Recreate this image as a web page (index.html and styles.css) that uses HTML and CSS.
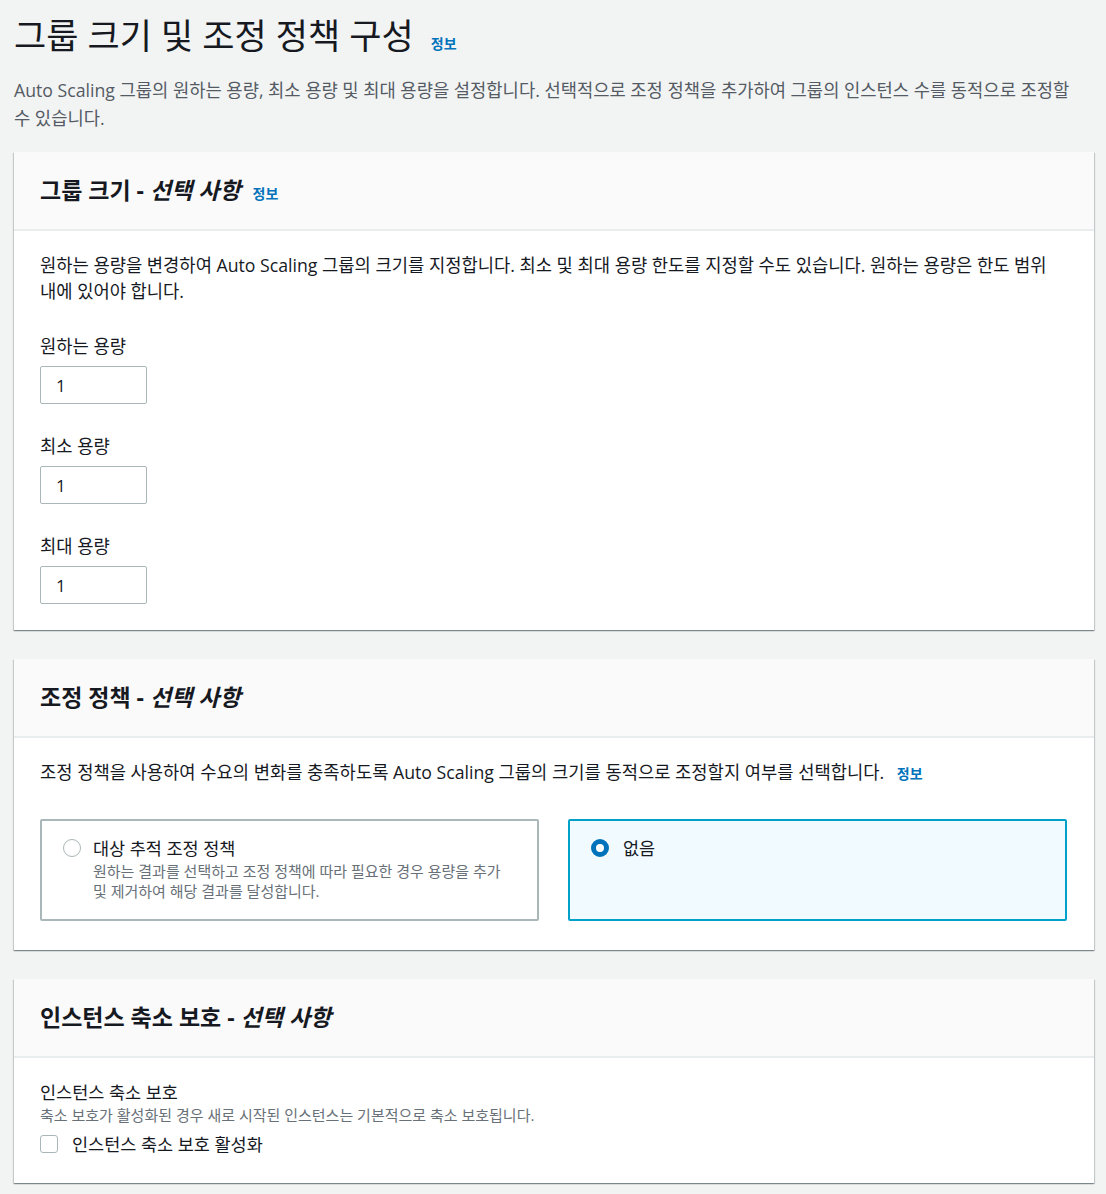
FILE: index.html
```html
<!DOCTYPE html>
<html lang="ko">

<head>
    <meta charset="UTF-8">
    <meta name="viewport" content="width=device-width, initial-scale=1.0">
    <title>그룹 크기 및 조정 정책 구성</title>
    <link rel="stylesheet" href="styles.css">
</head>

<body>
    <div class="page">
        <header class="page-head">
            <h1>그룹 크기 및 조정 정책 구성 <a class="info" href="#">정보</a></h1>
            <p class="page-desc">Auto Scaling 그룹의 원하는 용량, 최소 용량 및 최대 용량을 설정합니다. 선택적으로 조정 정책을 추가하여 그룹의 인스턴스 수를 동적으로 조정할 수 있습니다.</p>
        </header>

        <section class="card">
            <div class="card-head">
                <h2>그룹 크기 - <i>선택 사항</i> <a class="info" href="#">정보</a></h2>
            </div>
            <div class="card-body">
                <p class="card-text">원하는 용량을 변경하여 Auto Scaling 그룹의 크기를 지정합니다. 최소 및 최대 용량 한도를 지정할 수도 있습니다. 원하는 용량은 한도 범위 내에 있어야 합니다.</p>
                <div class="field">
                    <label for="desired">원하는 용량</label>
                    <input id="desired" class="num" type="text" value="1">
                </div>
                <div class="field">
                    <label for="min">최소 용량</label>
                    <input id="min" class="num" type="text" value="1">
                </div>
                <div class="field">
                    <label for="max">최대 용량</label>
                    <input id="max" class="num" type="text" value="1">
                </div>
            </div>
        </section>

        <section class="card">
            <div class="card-head">
                <h2>조정 정책 - <i>선택 사항</i></h2>
            </div>
            <div class="card-body">
                <p class="card-text">조정 정책을 사용하여 수요의 변화를 충족하도록 Auto Scaling 그룹의 크기를 동적으로 조정할지 여부를 선택합니다. <a class="info" href="#">정보</a></p>
                <div class="tiles">
                    <div class="tile">
                        <span class="radio"></span>
                        <div>
                            <div class="tile-title">대상 추적 조정 정책</div>
                            <div class="tile-desc">원하는 결과를 선택하고 조정 정책에 따라 필요한 경우 용량을 추가<br>및 제거하여 해당 결과를 달성합니다.</div>
                        </div>
                    </div>
                    <div class="tile selected">
                        <span class="radio on"></span>
                        <div>
                            <div class="tile-title">없음</div>
                        </div>
                    </div>
                </div>
            </div>
        </section>

        <section class="card">
            <div class="card-head">
                <h2>인스턴스 축소 보호 - <i>선택 사항</i></h2>
            </div>
            <div class="card-body protect">
                <div class="field-label">인스턴스 축소 보호</div>
                <div class="field-desc">축소 보호가 활성화된 경우 새로 시작된 인스턴스는 기본적으로 축소 보호됩니다.</div>
                <label class="check-row"><span class="checkbox"></span>인스턴스 축소 보호 활성화</label>
            </div>
        </section>
    </div>
</body>

</html>
```

FILE: styles.css
```css
body {
    margin: 0;
    font-family: "Open Sans", "Noto Sans CJK KR", sans-serif;
    background-color: #f2f3f3;
    color: #16191f;
    word-break: keep-all;
}

.page {
    width: 1080px;
    padding: 12px 0 0 14px;
}

.page-head h1 {
    margin: 0;
    font-size: 35px;
    font-weight: 400;
    line-height: 48px;
}

.info {
    font-size: 14px;
    font-weight: 700;
    color: #0073bb;
    text-decoration: none;
    margin-left: 8px;
}

.page-desc {
    margin: 8px 0 20px;
    padding-right: 15px;
    font-size: 17.7px;
    line-height: 28px;
    color: #545b64;
}

.card {
    background: #fff;
    box-shadow: 0 1px 1px 0 rgba(0, 28, 36, 0.3), 1px 1px 1px 0 rgba(0, 28, 36, 0.15), -1px 1px 1px 0 rgba(0, 28, 36, 0.15);
    margin-bottom: 29px;
}

.card-head {
    background: #fafafa;
    border-bottom: 2px solid #eaeded;
    height: 77px;
    display: flex;
    align-items: center;
    padding: 0 26px;
}

.card-head h2 {
    margin: 0;
    font-size: 23px;
    font-weight: 700;
    padding-bottom: 3px;
}

.card-head h2 i {
    font-style: italic;
}

.card-head .info {
    margin-left: 6px;
}

.card-body {
    padding: 21px 26px 26px;
}

.card-text {
    margin: 0;
    font-size: 17.7px;
    line-height: 26px;
}

.card-text .info {
    margin-left: 8px;
}

.field {
    margin-top: 30px;
}

.field label {
    display: block;
    font-size: 17.7px;
    line-height: 24px;
    margin-bottom: 8px;
}

.num {
    display: block;
    width: 107px;
    height: 38px;
    box-sizing: border-box;
    border: 1px solid #aab7b8;
    border-radius: 2px;
    padding: 0 15px;
    font-family: inherit;
    font-size: 17px;
    color: #16191f;
}

.tiles {
    display: grid;
    grid-template-columns: 1fr 1fr;
    gap: 29px;
    margin-top: 32px;
    padding-right: 1px;
    margin-bottom: 3px;
}

.tile {
    display: flex;
    gap: 12px;
    height: 102px;
    box-sizing: border-box;
    border: 2px solid #aab7b8;
    border-radius: 2px;
    padding: 16px 21px;
}

.tile.selected {
    border-color: #00a1c9;
    background: #f1faff;
}

.radio {
    flex: none;
    width: 18px;
    height: 18px;
    box-sizing: border-box;
    border: 1px solid #aab7b8;
    border-radius: 50%;
    margin-top: 2px;
    background: #fff;
}

.radio.on {
    border: 5px solid #0073bb;
}

.tile.selected .tile-title {
    padding-left: 2px;
}

.tile-title {
    font-size: 17.5px;
    line-height: 22px;
}

.tile-desc {
    margin-top: 2px;
    font-size: 15px;
    line-height: 20px;
    color: #687078;
}

.protect {
    padding-top: 22px;
    padding-bottom: 27px;
}

.field-label {
    font-size: 17.5px;
    line-height: 24px;
}

.field-desc {
    font-size: 15px;
    line-height: 22px;
    color: #687078;
}

.check-row {
    display: flex;
    align-items: center;
    gap: 14px;
    margin-top: 6px;
    font-size: 17.5px;
    line-height: 24px;
}

.checkbox {
    width: 18px;
    height: 18px;
    box-sizing: border-box;
    border: 1px solid #aab7b8;
    border-radius: 3px;
    background: #fff;
}
```
